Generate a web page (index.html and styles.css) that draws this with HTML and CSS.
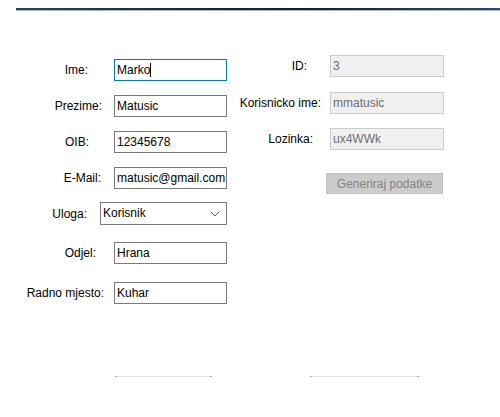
FILE: index.html
```html
<!DOCTYPE html>
<html lang="hr">
<head>
<meta charset="utf-8">
<title>Korisnik</title>
<link rel="stylesheet" href="styles.css">
</head>
<body>
<div class="topbar"></div>
<div class="form">
  <div class="col col-left">
    <div class="row r-ime"><label class="lbl">Ime:</label><span class="field-wrap"><input class="field focused" value="Marko"><span class="caret"></span></span></div>
    <div class="row r-prezime"><label class="lbl">Prezime:</label><input class="field" value="Matusic"></div>
    <div class="row r-oib"><label class="lbl">OIB:</label><input class="field" value="12345678"></div>
    <div class="row r-email"><label class="lbl">E-Mail:</label><input class="field" value="matusic@gmail.com"></div>
    <div class="row r-uloga"><label class="lbl">Uloga:</label>
      <div class="combo"><span class="combo-text">Korisnik</span>
        <svg class="chev" width="10" height="6" viewBox="0 0 10 6"><path d="M0.5 0.5 L5 5 L9.5 0.5" fill="none" stroke="#606060" stroke-width="1"/></svg>
      </div>
    </div>
    <div class="row r-odjel"><label class="lbl">Odjel:</label><input class="field" value="Hrana"></div>
    <div class="row r-radno"><label class="lbl">Radno mjesto:</label><input class="field" value="Kuhar"></div>
  </div>
  <div class="col col-right">
    <div class="row r-id"><label class="lbl">ID:</label><input class="field disabled" value="3" disabled></div>
    <div class="row r-kor"><label class="lbl">Korisnicko ime:</label><input class="field disabled" value="mmatusic" disabled></div>
    <div class="row r-loz"><label class="lbl">Lozinka:</label><input class="field disabled" value="ux4WWk" disabled></div>
    <button class="btn" disabled>Generiraj podatke</button>
  </div>
</div>
<div class="bottom">
  <div class="edge edge-a"></div>
  <div class="edge edge-b"></div>
</div>
</body>
</html>
```
FILE: styles.css
```css
html, body {
  margin: 0;
  padding: 0;
  background: #ffffff;
}
body {
  width: 500px;
  height: 417px;
  overflow: hidden;
  font-family: "Liberation Sans", Arial, sans-serif;
  font-size: 12px;
  color: #000;
}
.topbar {
  margin: 8px 0 0 16px;
  height: 2px;
  background: linear-gradient(to right, #23435f 0%, #112638 40%, #0e2030 60%, #2a4b68 100%);
  border-bottom: 1px solid #aab8c6;
}
.form {
  display: grid;
  grid-template-columns: 237px 1fr;
}
.col {
  display: flex;
  flex-direction: column;
}
.col-left { padding-top: 48px; }
.col-right { padding-top: 44px; }
.row {
  display: flex;
  align-items: center;
  height: 22px;
  margin-bottom: 14px;
}
.lbl {
  box-sizing: border-box;
  width: 114px;
  text-align: right;
  line-height: 22px;
  white-space: nowrap;
}
.r-ime .lbl { padding-right: 26px; }
.r-prezime .lbl { padding-right: 12px; }
.r-oib .lbl { padding-right: 25px; }
.r-email { margin-bottom: 13px; }
.r-email .lbl { padding-right: 13px; }
.r-uloga { height: 23px; margin-bottom: 17px; }
.r-uloga .lbl { width: 100px; padding-right: 13px; }
.r-odjel { margin-bottom: 18px; }
.r-odjel .lbl { padding-right: 18px; }
.r-radno .lbl { padding-right: 10px; }

.col-right .lbl { width: 93px; }
.r-id { margin-bottom: 15px; }
.r-id .lbl { padding-right: 23px; }
.r-kor .lbl { padding-right: 9px; }
.r-loz .lbl { padding-right: 17px; }

.field-wrap {
  position: relative;
  display: block;
}
.field {
  box-sizing: border-box;
  width: 113px;
  height: 22px;
  margin: 0;
  padding: 0 0 0 2px;
  border: 1px solid #7a7a7a;
  background: #fff;
  font-family: "Liberation Sans", Arial, sans-serif;
  font-size: 12px;
  color: #000;
  outline: none;
}
.field.focused { border-color: #0078d7; }
.caret {
  position: absolute;
  left: 36px;
  top: 4px;
  width: 1px;
  height: 14px;
  background: #000;
}
.col-right .field { width: 114px; }
.field.disabled {
  background: #f0f0f0;
  border-color: #cccccc;
  color: #6d6d6d;
}
.combo {
  box-sizing: border-box;
  width: 127px;
  height: 23px;
  border: 1px solid #7a7a7a;
  display: flex;
  align-items: center;
  justify-content: space-between;
  padding: 0 6px 0 2px;
  background: #fff;
}
.combo-text { line-height: 21px; }
.chev { display: block; }
.btn {
  box-sizing: border-box;
  margin: 9px 0 0 89px;
  width: 117px;
  height: 21px;
  padding: 0;
  background: #cccccc;
  border: 1px solid #bfbfbf;
  color: #838383;
  font-family: "Liberation Sans", Arial, sans-serif;
  font-size: 12px;
}
.bottom {
  display: flex;
  margin-top: 58px;
}
.edge {
  box-sizing: border-box;
  height: 1px;
  background: #e3e3e3;
  border-left: 2px solid #adadad;
  border-right: 2px solid #adadad;
}
.edge-a { width: 97px; margin-left: 115px; }
.edge-b { width: 109px; margin-left: 98px; }
```
